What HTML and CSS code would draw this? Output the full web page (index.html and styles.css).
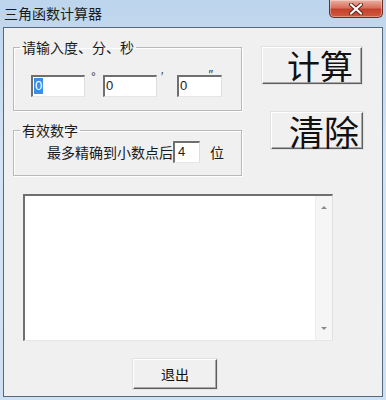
FILE: index.html
```html
<!DOCTYPE html>
<html lang="zh-CN">
<head>
    <meta charset="UTF-8">
    <title>三角函数计算器</title>
    <link rel="stylesheet" href="styles.css">
</head>
<body>
    <div class="window">
        <div class="titlebar">
            <span class="title">三角函数计算器</span>
            <div class="close">
                <svg width="18" height="12" viewBox="0 0 18 12">
                    <path d="M4 1.5 L14 10.5 M14 1.5 L4 10.5" stroke="#5a2018" stroke-width="4" stroke-linecap="round"/>
                    <path d="M4 1.5 L14 10.5 M14 1.5 L4 10.5" stroke="#fff" stroke-width="2.2" stroke-linecap="round"/>
                </svg>
            </div>
        </div>

        <div class="client">
            <div class="top">
                <div class="groups">
                    <fieldset class="group group-angle">
                        <legend>请输入度、分、秒</legend>
                        <div class="angle-row">
                            <div class="edit edit-deg"><span class="sel">0</span></div>
                            <span class="mark mark-deg">°</span>
                            <div class="edit edit-min">0</div>
                            <span class="mark mark-min">′</span>
                            <div class="edit edit-sec">0<span class="mark-sec">″</span></div>
                        </div>
                    </fieldset>

                    <fieldset class="group group-digits">
                        <legend>有效数字</legend>
                        <div class="digits-row">
                            <span>最多精确到小数点后</span>
                            <div class="edit edit-digits">4</div>
                            <span class="unit">位</span>
                        </div>
                    </fieldset>
                </div>

                <div class="actions">
                    <div class="btn btn-calc">计算</div>
                    <div class="btn btn-clear">清除</div>
                </div>
            </div>

            <div class="output">
                <div class="output-text"></div>
                <div class="scrollbar">
                    <span class="arrow arrow-up"></span>
                    <span class="arrow arrow-down"></span>
                </div>
            </div>

            <div class="btn btn-exit">退出</div>
        </div>
    </div>
</body>
</html>
```

FILE: styles.css
```css
/* Base */
* {
    margin: 0;
    padding: 0;
    box-sizing: border-box;
}

body {
    font-family: "Noto Sans CJK SC", "Liberation Sans", sans-serif;
    background: #c9ddf1;
    color: #1a1a1a;
    width: 386px;
    height: 400px;
    overflow: hidden;
}

/* Window frame */
.window {
    width: 386px;
    height: 400px;
    display: flex;
    flex-direction: column;
    background: linear-gradient(to bottom, #bdd5ed 0%, #d3e4f4 40%, #cfe0f2 100%);
}

.titlebar {
    height: 27px;
    display: flex;
    justify-content: space-between;
    align-items: flex-start;
    padding-left: 4px;
    padding-right: 3px;
}

.title {
    font-size: 14px;
    line-height: 16px;
    margin-top: 5px;
    color: #1c1c1c;
}

.close {
    width: 54px;
    height: 18px;
    border: 1px solid #6a2e24;
    border-top: none;
    border-radius: 0 0 5px 5px;
    background: linear-gradient(to bottom, #e9b1a3 0%, #d9705c 45%, #c4422c 55%, #d05a3e 100%);
    box-shadow: inset 0 0 0 1px rgba(255, 255, 255, 0.35);
    display: flex;
    justify-content: center;
    align-items: center;
}

.client {
    flex: 1;
    margin: 0 3px 3px 3px;
    border: 1px solid #56687b;
    background: #f0f0f0;
    padding: 11px 0 0 9px;
}

/* Top area */
.top {
    display: flex;
}

.groups {
    width: 229px;
}

.group {
    border: 1px solid #b9b9b9;
    box-shadow: 1px 1px 0 #fff, inset 1px 1px 0 #fff;
    padding: 0;
    margin: 0;
}

.group legend {
    font-size: 14px;
    line-height: 16px;
    margin-left: 6px;
    padding: 0 2px;
}

.group-digits {
    margin-top: 11px;
}

.angle-row {
    display: flex;
    align-items: flex-start;
    padding: 20px 0 13px 17px;
}

.digits-row {
    display: flex;
    align-items: center;
    padding: 3px 0 12px 33px;
    font-size: 14px;
}

.unit {
    margin-left: 10px;
}

/* Edit boxes */
.edit {
    height: 22px;
    background: #fff;
    border-top: 2px solid #6f6f6f;
    border-left: 2px solid #6f6f6f;
    border-right: 1px solid #dedede;
    border-bottom: 1px solid #e6e6e6;
    font-family: "Liberation Sans", sans-serif;
    font-size: 13px;
    line-height: 18px;
    padding-left: 1px;
}

.edit-deg { width: 54px; }
.edit-min { width: 54px; }
.edit-sec { width: 45px; position: relative; }
.edit-digits { width: 27px; padding-left: 3px; }

.sel {
    display: inline-block;
    background: #3a8ee6;
    color: #fff;
    padding: 0 1px;
    line-height: 16px;
}

.mark {
    font-family: "Liberation Sans", sans-serif;
    font-size: 12px;
    line-height: 12px;
    margin-top: -4px;
    color: #333;
}

.mark-deg {
    width: 18px;
    padding-left: 6px;
}

.mark-min {
    width: 20px;
    padding-left: 4px;
}

.mark-sec {
    position: absolute;
    top: -11px;
    right: 8px;
    font-size: 13px;
    color: #333;
}

/* Buttons */
.btn {
    background: #f0f0f0;
    border: 1px solid;
    border-color: #fff #5e5e5e #5e5e5e #fff;
    box-shadow: inset -1px -1px 0 #a8a8a8, 0 0 0 1px #e2e2e2;
    display: flex;
    align-items: center;
    color: #111;
}

.actions {
    display: flex;
    flex-direction: column;
    align-items: flex-start;
    margin-left: 20px;
}

.btn-calc {
    width: 100px;
    height: 37px;
    margin-top: 8px;
    justify-content: flex-end;
    padding-right: 8px;
    font-size: 33px;
    line-height: 37px;
}

.btn-clear {
    width: 92px;
    height: 37px;
    margin-top: 28px;
    margin-left: 9px;
    justify-content: flex-end;
    padding-right: 3px;
    font-size: 35px;
    line-height: 37px;
}

.btn-exit {
    width: 84px;
    height: 30px;
    margin: 18px 0 0 120px;
    justify-content: center;
    font-size: 14px;
}

/* Output box */
.output {
    width: 310px;
    height: 147px;
    margin: 18px 0 0 10px;
    display: flex;
    background: #fff;
    border-top: 2px solid #6f6f6f;
    border-left: 2px solid #6f6f6f;
    border-right: 1px solid #e0e0e0;
    border-bottom: 1px solid #e6e6e6;
}

.output-text {
    flex: 1;
}

.scrollbar {
    width: 17px;
    background: #f6f6f6;
    border-left: 1px solid #ececec;
    display: flex;
    flex-direction: column;
    justify-content: space-between;
    align-items: center;
    padding: 10px 0 10px;
}

.arrow {
    width: 0;
    height: 0;
    border-left: 3px solid transparent;
    border-right: 3px solid transparent;
}

.arrow-up {
    border-bottom: 3px solid #8a8a8a;
}

.arrow-down {
    border-top: 3px solid #8a8a8a;
}
```
